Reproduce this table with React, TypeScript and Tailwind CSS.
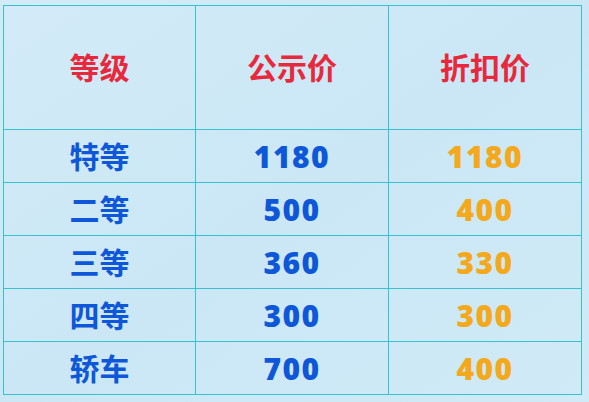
const rows = [
  { level: "特等", list: "1180", sale: "1180" },
  { level: "二等", list: "500", sale: "400" },
  { level: "三等", list: "360", sale: "330" },
  { level: "四等", list: "300", sale: "300" },
  { level: "轿车", list: "700", sale: "400" },
];

const font = { fontFamily: '"Open Sans", "Noto Sans CJK SC", sans-serif' };

export default function App() {
  return (
    <div
      className="w-[589px] h-[402px] pl-[3px] pt-[5px] bg-gradient-to-br from-[#d3ebf8] via-[#cbe7f5] to-[#d0eaf7]"
      style={font}
    >
      <table className="border-collapse table-fixed w-[579px] font-bold">
        <thead>
          <tr className="h-[124px]">
            {["等级", "公示价", "折扣价"].map((h, i) => (
              <th
                key={h}
                className={`border border-[#38c1d1] text-[30px] text-[#e8283c] font-bold ${
                  i === 0 ? "w-[192px]" : "w-[193px]"
                }`}
              >
                {h}
              </th>
            ))}
          </tr>
        </thead>
        <tbody>
          {rows.map((r) => (
            <tr key={r.level} className="h-[53px]">
              <td className="border border-[#38c1d1] text-center text-[30px] text-[#0d57d8]">
                {r.level}
              </td>
              <td className="border border-[#38c1d1] text-center text-[30px] font-extrabold tracking-[1.5px] text-[#0d57d8]">
                {r.list}
              </td>
              <td className="border border-[#38c1d1] text-center text-[30px] font-extrabold tracking-[1.5px] text-[#f4a81c]">
                {r.sale}
              </td>
            </tr>
          ))}
        </tbody>
      </table>
    </div>
  );
}
